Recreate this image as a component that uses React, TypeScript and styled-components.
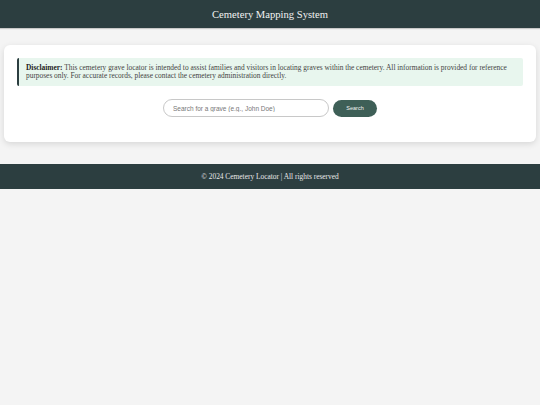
import React from "react";
import styled, { createGlobalStyle } from "styled-components";

const GlobalStyle = createGlobalStyle`
  html, body {
    margin: 0;
    padding: 0;
    background: #f4f4f4;
    font-family: "Liberation Serif", Georgia, serif;
  }
  * { box-sizing: border-box; }
`;

const Header = styled.header`
  height: 28px;
  background: #2c3e40;
  color: #f2f2f2;
  display: flex;
  align-items: center;
  justify-content: center;
  box-shadow: 0 1px 1px rgba(0, 0, 0, 0.18);
`;

const Title = styled.h1`
  margin: 0;
  font-size: 10.6px;
  font-weight: 400;
`;

const Main = styled.main`
  padding: 17px 4px 0;
`;

const Card = styled.section`
  background: #ffffff;
  border-radius: 6px;
  padding: 13px 13px 25px;
  box-shadow: 0 2px 6px rgba(0, 0, 0, 0.12);
  display: flex;
  flex-direction: column;
  gap: 13px;
`;

const Disclaimer = styled.div`
  background: #e8f6ee;
  border-left: 2px solid #2c3e40;
  border-radius: 2px;
  padding: 6px 7px;
  font-size: 7.4px;
  line-height: 8px;
  color: #444;
`;

const Strong = styled.strong`
  color: #222;
  font-weight: 700;
`;

const SearchForm = styled.form`
  display: flex;
  justify-content: center;
  align-items: center;
  gap: 4px;
`;

const SearchInput = styled.input`
  width: 166px;
  height: 18px;
  border: 1px solid #c8c8c8;
  border-radius: 10px;
  padding: 0 9px;
  font-family: "Liberation Sans", Arial, sans-serif;
  font-size: 6.5px;
  color: #333;
  outline: none;
  background: #fff;
  &::placeholder {
    color: #777;
  }
`;

const SearchButton = styled.button`
  width: 44px;
  height: 17px;
  border: none;
  border-radius: 9px;
  background: #3e5f57;
  color: #f4f4f4;
  font-family: "Liberation Sans", Arial, sans-serif;
  font-size: 5.5px;
  padding: 0;
  cursor: pointer;
`;

const Footer = styled.footer`
  margin-top: 22px;
  height: 25px;
  background: #2c3e40;
  color: #e8e8e8;
  display: flex;
  align-items: center;
  justify-content: center;
  font-size: 7.4px;
`;

export default function App() {
  return (
    <>
      <GlobalStyle />
      <Header>
        <Title>Cemetery Mapping System</Title>
      </Header>
      <Main>
        <Card>
          <Disclaimer>
            <Strong>Disclaimer:</Strong> This cemetery grave locator is intended to assist families and
            visitors in locating graves within the cemetery. All information is provided for reference
            purposes only. For accurate records, please contact the cemetery administration directly.
          </Disclaimer>
          <SearchForm onSubmit={(e) => e.preventDefault()}>
            <SearchInput type="text" placeholder="Search for a grave (e.g., John Doe)" />
            <SearchButton type="submit">Search</SearchButton>
          </SearchForm>
        </Card>
      </Main>
      <Footer>© 2024 Cemetery Locator | All rights reserved</Footer>
    </>
  );
}
